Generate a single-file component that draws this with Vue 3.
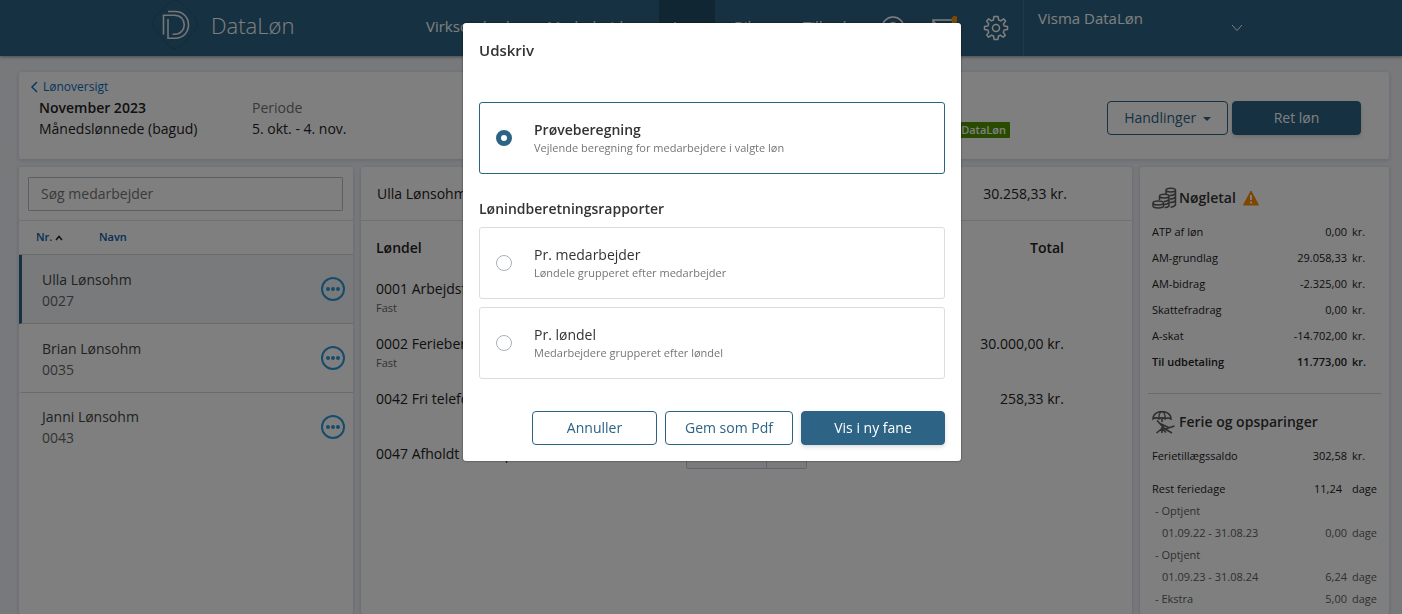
<script setup>
import { ref } from 'vue'

const nav = ['Virksomhed', 'Medarbejdere', 'Løn', 'Bilag', 'Tilbud']

const employees = [
  { name: 'Ulla Lønsohm', no: '0027' },
  { name: 'Brian Lønsohm', no: '0035' },
  { name: 'Janni Lønsohm', no: '0043' },
]

const payLines = [
  { name: '0001 Arbejdsfortjeneste', note: 'Fast', total: '' },
  { name: '0002 Ferieberettiget løn', note: 'Fast', total: '30.000,00 kr.' },
  { name: '0042 Fri telefon', note: '', total: '258,33 kr.' },
  { name: '0047 Afholdt ferien på løn', note: '', total: '', input: true },
]

const keyFigures = [
  { label: 'ATP af løn', value: '0,00' },
  { label: 'AM-grundlag', value: '29.058,33' },
  { label: 'AM-bidrag', value: '-2.325,00' },
  { label: 'Skattefradrag', value: '0,00' },
  { label: 'A-skat', value: '-14.702,00' },
  { label: 'Til udbetaling', value: '11.773,00', strong: true },
]

const holidays = [
  { label: 'Rest feriedage', value: '11,24', unit: 'dage', kind: 'sum' },
  { label: '- Optjent', value: '', unit: '', kind: 'sub' },
  { label: '01.09.22 - 31.08.23', value: '0,00', unit: 'dage', kind: 'span' },
  { label: '- Optjent', value: '', unit: '', kind: 'sub' },
  { label: '01.09.23 - 31.08.24', value: '6,24', unit: 'dage', kind: 'span' },
  { label: '- Ekstra', value: '5,00', unit: 'dage', kind: 'sub' },
]

const reports = [
  { id: 'employee', title: 'Pr. medarbejder', text: 'Løndele grupperet efter medarbejder' },
  { id: 'payline', title: 'Pr. løndel', text: 'Medarbejdere grupperet efter løndel' },
]

const selected = ref('trial')
const search = ref('')
const units = ref('')
</script>

<template>
  <div class="page">
    <header class="topbar">
      <a class="brand" href="#">
        <svg class="logo" width="48" height="50" viewBox="0 0 48 50" fill="none" aria-hidden="true">
          <path d="M18 3Q24-2 30 3L44 17Q49 24 44 30L30 46Q24 51 18 46L4 30Q-1 24 4 17Z" stroke="#29546b" />
          <path d="M12.500 34.500V15.200H23.500C36.500 15.200 36.500 34.300 23.500 34.300H21.500" stroke="#e8ecef" stroke-width="1.600" />
          <path d="M17 11.500H24C42 11.500 42 38.200 24 38.200H17V19" stroke="#e8ecef" stroke-width="1.600" />
        </svg>
        <span>DataLøn</span>
      </a>
      <nav class="nav">
        <a v-for="item in nav" :key="item" href="#" :class="{ active: item === 'Løn' }">{{ item }}</a>
      </nav>
      <div class="tools">
        <button type="button" aria-label="Hjælp">
          <svg width="24" height="24" viewBox="0 0 24 24" fill="none" stroke="#fff" stroke-width="1.500">
            <circle cx="12" cy="12" r="11" />
            <path d="M9 9.500C9 5.500 15 5.500 15 9.500C15 12 12 12 12 15M12 17V18.500" />
          </svg>
        </button>
        <button type="button" aria-label="Beskeder">
          <svg width="26" height="24" viewBox="0 0 26 24" fill="none" stroke="#fff" stroke-width="1.500">
            <path d="M2 4H24V21H2ZM2 5L13 14L24 5" />
            <circle cx="24" cy="3.500" r="3.500" fill="#ff9200" stroke="none" />
          </svg>
        </button>
        <button type="button" aria-label="Indstillinger">
          <svg width="26" height="26" viewBox="0 0 26 26" fill="none" stroke="#fff" stroke-width="1.500" stroke-linejoin="round">
            <path d="M11 1.500H15L15.700 5L17.800 5.900L20.700 3.900L22.600 6L20.500 8.900L21.200 11L24.500 11.600V14.400L21.200 15L20.300 17.200L22.300 20.100L20.200 22.200L17.300 20.200L15.500 21L14.800 24.500H11.200L10.500 21L8.500 20.200L5.600 22.200L3.700 20.100L5.700 17.200L4.900 15L1.500 14.400V11.600L4.900 11L5.700 8.900L3.700 6L5.600 3.900L8.500 5.900L10.400 5Z" />
            <circle cx="13" cy="13" r="3.500" />
          </svg>
        </button>
      </div>
      <button type="button" class="account">
        <span>Visma DataLøn</span>
        <svg width="12" height="8" viewBox="0 0 12 8" fill="none" stroke="#fff"><path d="M1 1L6 6.500L11 1" /></svg>
      </button>
    </header>

    <main class="content">
      <section class="card summary">
        <div class="run">
          <a class="back" href="#">
            <svg width="8" height="12" viewBox="0 0 8 12" fill="none" stroke="#0a78c2" stroke-width="1.500"><path d="M7 1L2 6L7 11" /></svg>
            Lønoversigt
          </a>
          <strong>November 2023</strong>
          <span>Månedslønnede (bagud)</span>
        </div>
        <div class="period">
          <span class="muted">Periode</span>
          <span>5. okt. - 4. nov.</span>
        </div>
        <span class="badge">DataLøn</span>
        <div class="actions">
          <button type="button" class="btn outline">Handlinger <i class="caret"></i></button>
          <button type="button" class="btn primary">Ret løn</button>
        </div>
      </section>

      <div class="columns">
        <section class="card people">
          <div class="search">
            <input v-model="search" type="text" placeholder="Søg medarbejder" aria-label="Søg medarbejder" />
          </div>
          <div class="sorting">
            <button type="button">Nr.
              <svg width="8" height="6" viewBox="0 0 8 6" fill="none" stroke="#222" stroke-width="1.500"><path d="M1 5L4 1.500L7 5" /></svg>
            </button>
            <button type="button">Navn</button>
          </div>
          <ul>
            <li v-for="(person, i) in employees" :key="person.no" :class="{ current: i === 0 }">
              <div>
                <span>{{ person.name }}</span>
                <span class="no">{{ person.no }}</span>
              </div>
              <button type="button" :aria-label="'Handlinger for ' + person.name">
                <svg width="24" height="24" viewBox="0 0 24 24" fill="none">
                  <circle cx="12" cy="12" r="11" stroke="#2f97d8" stroke-width="2" />
                  <g fill="#2f97d8"><circle cx="7" cy="12" r="2" /><circle cx="12" cy="12" r="2" /><circle cx="17" cy="12" r="2" /></g>
                </svg>
              </button>
            </li>
          </ul>
        </section>

        <section class="card pay">
          <div class="payhead">
            <span>Ulla Lønsohm</span>
            <span>30.258,33 kr.</span>
          </div>
          <table>
            <thead>
              <tr><th>Løndel</th><th></th><th class="num">Total</th></tr>
            </thead>
            <tbody>
              <tr v-for="line in payLines" :key="line.name">
                <td>{{ line.name }}<small v-if="line.note">{{ line.note }}</small></td>
                <td class="entry">
                  <div v-if="line.input" class="amount">
                    <input v-model="units" type="text" aria-label="Antal dage" />
                    <span></span>
                  </div>
                </td>
                <td class="num">{{ line.total }}</td>
              </tr>
            </tbody>
          </table>
        </section>

        <aside class="card facts">
          <h2>
            <svg width="25" height="22" viewBox="0 0 25 22" fill="none" stroke="#5c5c5c" stroke-width="1.500">
              <path d="M14 3V7M23.500 3V18Q22 20 18.500 20.200M14 3C14 .5 23.500 .5 23.500 3C23.500 5.500 14 5.500 14 3ZM17.500 8.500Q22 8.500 23.500 6.500M18 12Q22 12 23.500 10M18 15.500Q22 15.500 23.500 13.500" />
              <path d="M7.500 9V13M17 9V19Q16 20.500 12.500 20.500M7.500 9C7.500 6.500 17 6.500 17 9C17 11.500 7.500 11.500 7.500 9ZM12 14.500Q15.500 14.500 17 12.500M12 17.500Q15.500 17.500 17 15.500" />
              <path d="M1 16V19C1 21.500 11.500 21.500 11.500 19V16M1 16C1 13.200 11.500 13.200 11.500 16C11.500 18.500 1 18.500 1 16Z" />
            </svg>
            Nøgletal
            <svg class="warn" width="16" height="16" viewBox="0 0 16 16" aria-label="Advarsel">
              <path d="M8 1L15.500 15H.5Z" fill="#ff8c00" stroke="#ff8c00" stroke-linejoin="round" />
              <path d="M8 5V10M8 11.500V13.500" stroke="#fff" stroke-width="2" />
            </svg>
          </h2>
          <table class="figures">
            <tbody>
              <tr v-for="row in keyFigures" :key="row.label" :class="{ strong: row.strong }">
                <td>{{ row.label }}</td>
                <td class="value">{{ row.value }}</td>
                <td class="unit">kr.</td>
              </tr>
            </tbody>
          </table>
          <hr />
          <h2>
            <svg width="25" height="24" viewBox="0 0 25 24" fill="none" stroke="#5c5c5c" stroke-width="1.500">
              <path d="M1 9C1-1 19-1 19 9C16.500 7.500 15 7.500 13 9C11 7.500 9 7.500 7 9C5 7.500 3 7.500 1 9ZM7 9C6.500 5 8 2 10 1.500C12 2 13.500 5 13 9M10 9V12" />
              <path d="M5 10.500L13 19L22.500 16M8 13.500L16.500 17.500M10 17V23M10 18.500L4.500 23M13 19L20 23M10 18.500L14 22.500" stroke-width="1.600" />
            </svg>
            Ferie og opsparinger
          </h2>
          <table class="balance">
            <tbody>
              <tr><td>Ferietillægssaldo</td><td class="value">302,58</td><td class="unit">kr.</td></tr>
            </tbody>
          </table>
          <table class="days">
            <tbody>
              <tr v-for="(row, i) in holidays" :key="i" :class="row.kind">
                <td>{{ row.label }}</td>
                <td class="value">{{ row.value }}</td>
                <td class="unit">{{ row.unit }}</td>
              </tr>
            </tbody>
          </table>
        </aside>
      </div>
    </main>

    <div class="backdrop">
      <form class="dialog" role="dialog" aria-modal="true" aria-labelledby="dialog-title" @submit.prevent>
        <h1 id="dialog-title">Udskriv</h1>
        <label class="option" :class="{ chosen: selected === 'trial' }">
          <input v-model="selected" type="radio" name="report" value="trial" />
          <span><b>Prøveberegning</b><small>Vejlende beregning for medarbejdere i valgte løn</small></span>
        </label>
        <h3>Lønindberetningsrapporter</h3>
        <div class="options">
          <label v-for="r in reports" :key="r.id" class="option" :class="{ chosen: selected === r.id }">
            <input v-model="selected" type="radio" name="report" :value="r.id" />
            <span><b>{{ r.title }}</b><small>{{ r.text }}</small></span>
          </label>
        </div>
        <footer>
          <button type="button" class="btn outline cancel">Annuller</button>
          <button type="button" class="btn outline pdf">Gem som Pdf</button>
          <button type="submit" class="btn primary show">Vis i ny fane</button>
        </footer>
      </form>
    </div>
  </div>
</template>

<style>
body {
  background: #f0f2f7;
}
</style>

<style scoped>
.page,
.page * {
  box-sizing: border-box;
}

.page {
  display: flex;
  flex-direction: column;
  min-height: 100vh;
  background: #f0f2f7;
  color: #222;
  font: 14px/21px "Open Sans", "Noto Sans", sans-serif;
}

button,
input {
  font: inherit;
  color: inherit;
}

button {
  padding: 0;
  border: 0;
  background: none;
}

a {
  color: inherit;
  text-decoration: none;
}

svg {
  flex: none;
}

.topbar {
  display: flex;
  height: 56px;
  background: #2d6384;
  color: #fff;
  font-size: 15px;
  box-shadow: 0 1px 3px rgba(0, 0, 0, 0.4);
}

.brand {
  display: flex;
  flex: none;
  gap: 12px;
  width: 412px;
  padding-left: 151px;
  font-size: 22px;
  font-weight: 300;
  line-height: 50px;
}

.nav {
  display: grid;
  flex: none;
  grid-template-columns: 121px 126px 61px 69px 79px;
  font-weight: 500;
  line-height: 52px;
}

.nav a {
  padding-left: 14px;
}

.nav .active {
  width: 56px;
  background: #234c66;
}

.tools {
  display: grid;
  flex: none;
  grid-template-columns: 50px 51px 54px;
}

.tools button {
  display: grid;
  place-items: center;
}

.account {
  display: flex;
  flex: 1;
  align-items: flex-start;
  border-left: 1px solid #41718f;
  padding: 8px 14px;
  color: #fff;
  font-size: 15px;
  text-align: left;
}

.account span {
  flex: 0 1 193px;
}

.account svg {
  margin-top: 16px;
}

.content {
  display: flex;
  flex: 1;
  flex-direction: column;
  gap: 8px;
  padding: 16px 13px 0 19px;
}

.card {
  background: #fff;
  border-radius: 2px;
  box-shadow: 0 1px 4px rgba(50, 60, 110, 0.2);
}

.summary {
  display: flex;
  align-items: flex-start;
  height: 87px;
  padding: 4px 28px 0 20px;
}

.run,
.period {
  display: flex;
  flex-direction: column;
}

.run {
  width: 213px;
}

.run strong {
  font-weight: 600;
}

.back {
  display: flex;
  align-items: center;
  gap: 5px;
  margin-left: -9px;
  color: #0a6ebd;
  font-size: 12px;
}

.period {
  padding-top: 21px;
}

.muted {
  color: #737373;
}

.badge {
  margin: 46px 97px 0 auto;
  padding: 0 4px;
  border-radius: 1px;
  background: #509600;
  color: #fff;
  font-size: 11px;
  font-weight: 600;
  line-height: 16px;
}

.actions {
  display: grid;
  grid-template-columns: 121px 129px;
  gap: 4px;
  margin-top: 25px;
}

.btn {
  height: 34px;
  padding-bottom: 2px;
  border: 1px solid #2d6384;
  border-radius: 4px;
}

.outline {
  background: #fff;
  color: #2d6384;
}

.primary {
  background: #2d6384;
  color: #fff;
  font-weight: 500;
  box-shadow: 0 2px 4px rgba(0, 0, 0, 0.15);
}

.caret {
  display: inline-block;
  margin-left: 3px;
  border: 4px solid transparent;
  border-top-color: #2d6384;
  border-bottom: 0;
  vertical-align: middle;
}

.columns {
  display: grid;
  flex: 1;
  grid-template-columns: 334px 1fr 249px;
  gap: 8px;
}

.search {
  height: 54px;
  padding: 10px 10px 0 9px;
  border-bottom: 1px solid #dde0e4;
}

.search input {
  width: 100%;
  height: 34px;
  padding: 0 12px 2px;
  border: 1px solid #b9bec4;
  border-radius: 1px;
  background: #fff;
}

.search input::placeholder {
  color: #757575;
}

.sorting {
  display: flex;
  height: 34px;
  padding: 0 0 2px 17px;
  border-bottom: 1px solid #d2d4d8;
  color: #0a5ea8;
  font-size: 11px;
  font-weight: 600;
}

.sorting button {
  width: 63px;
  text-align: left;
}

.people ul {
  margin: 0;
  padding: 0;
  list-style: none;
}

.people li {
  display: flex;
  align-items: center;
  justify-content: space-between;
  height: 69px;
  padding: 0 8px 0 20px;
  border-left: 3px solid transparent;
  border-bottom: 1px solid #d2d4d8;
  color: #444;
}

.people li:last-child {
  height: 67px;
  border-bottom: 0;
}

.people .current {
  border-left-color: #2d6384;
  background: #f0f4f7;
}

.people li div {
  display: grid;
  padding-top: 1px;
}

.people .no {
  color: #666;
}

.people li button {
  display: grid;
}

.payhead {
  display: flex;
  justify-content: space-between;
  height: 54px;
  padding: 0 65px 0 16px;
  border-bottom: 1px solid #dde0e4;
  line-height: 53px;
}

.pay table {
  width: 100%;
  border-collapse: collapse;
  table-layout: fixed;
}

.pay th {
  height: 52px;
  padding: 0 0 0 15px;
  font-weight: 600;
  text-align: left;
}

.pay td {
  height: 55px;
  padding: 5px 0 0 15px;
  vertical-align: top;
}

.pay .entry {
  padding-top: 3px;
}

.pay th:first-child {
  width: 310px;
}

.pay .num {
  padding-right: 68px;
  text-align: right;
}

.pay td small {
  display: block;
  color: #666;
  font-size: 11px;
  line-height: 17px;
}

.amount {
  display: grid;
  grid-template-columns: 80px 41px;
  width: 121px;
  height: 28px;
  border: 1px solid #c8ccd2;
  border-radius: 2px;
  background: #f4f5f8;
}

.amount input {
  min-width: 0;
  height: 26px;
  border: 0;
  border-right: 1px solid #c8ccd2;
  background: none;
}

.facts {
  padding: 19px 12px 0;
  font-size: 11px;
  line-height: 16px;
}

.facts h2 {
  display: flex;
  align-items: center;
  gap: 2px;
  height: 24px;
  margin: 0;
  color: #333;
  font-size: 14px;
  font-weight: 600;
}

.warn {
  margin-left: 5px;
}

.facts table {
  width: 100%;
  border-collapse: collapse;
}

.facts td {
  padding: 0;
}

.facts .value {
  text-align: right;
}

.facts .unit {
  width: 30px;
  padding-left: 5px;
}

.figures {
  margin-top: 9px;
}

.figures tr {
  height: 26px;
}

.strong {
  font-weight: 600;
}

.facts hr {
  height: 1px;
  margin: 18px -4px 16px;
  border: 0;
  background: #d2d4d8;
}

.balance {
  margin: 11px 0;
}

.days tr,
.balance tr {
  height: 22px;
}

.days .sub,
.days .span {
  color: #606060;
}

.days .sum .value {
  padding-right: 5px;
}

.days .sub td:first-child {
  padding-left: 3px;
}

.days .span td:first-child {
  padding-left: 10px;
}

.backdrop {
  position: fixed;
  inset: 0;
  display: flex;
  align-items: flex-start;
  justify-content: center;
  padding: 23px 0 0 22px;
  background: rgba(0, 0, 0, 0.5);
}

.dialog {
  width: 498px;
  padding: 16px;
  border-radius: 3px;
  background: #fff;
  color: #333;
  box-shadow: 0 0 2px rgba(0, 0, 0, 0.7);
}

.dialog h1 {
  margin: 0 0 40px;
  font-size: 15px;
  font-weight: 600;
  line-height: 23px;
}

.dialog h3 {
  margin: 24px 0 8px;
  font-size: 14px;
  font-weight: 600;
}

.options {
  display: grid;
  gap: 8px;
}

.option {
  display: flex;
  align-items: center;
  gap: 22px;
  height: 72px;
  padding: 0 16px;
  border: 1px solid #d9dde2;
  border-radius: 3px;
}

.option input {
  width: 16px;
  height: 16px;
  margin: 0;
  border: 1px solid #a9b0b8;
  border-radius: 50%;
  appearance: none;
}

.option input:checked {
  border: 5px solid #2d6384;
}

.option span {
  display: grid;
}

.option b {
  font-weight: 400;
  line-height: 20px;
}

.option small {
  color: #757575;
  font-size: 11px;
  line-height: 16px;
}

.chosen {
  border-color: #2d6384;
}

.chosen b {
  font-weight: 600;
}

.dialog footer {
  display: flex;
  justify-content: flex-end;
  gap: 8px;
  margin-top: 32px;
}

.cancel {
  width: 125px;
}

.pdf {
  width: 128px;
}

.show {
  width: 144px;
}
</style>
